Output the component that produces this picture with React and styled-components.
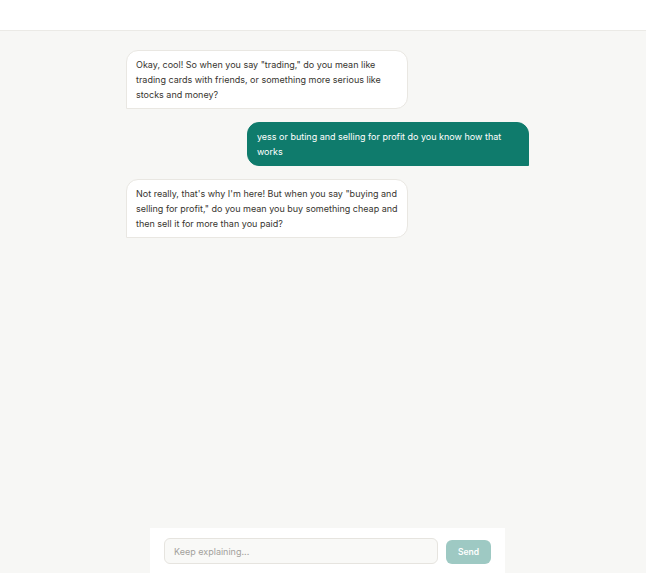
import React from "react";
import styled, { createGlobalStyle } from "styled-components";

const Global = createGlobalStyle`
  html, body { margin: 0; padding: 0; height: 100%; }
  body { font-family: Inter, "Noto Sans", sans-serif; background: #f7f7f5; color: #37352f; }
  #root { height: 100%; }
`;

const Page = styled.div`
  height: 573px;
  display: flex;
  flex-direction: column;
  overflow: hidden;
`;

const Header = styled.header`
  height: 30px;
  flex: none;
  background: #ffffff;
  border-bottom: 1px solid #ebeae6;
`;

const Thread = styled.main`
  flex: 1;
  display: flex;
  flex-direction: column;
  gap: 13px;
  width: 403px;
  margin-left: 126px;
  padding-top: 19px;
  box-sizing: border-box;
`;

const Bubble = styled.div`
  max-width: 70%;
  box-sizing: border-box;
  padding: 6px 9px;
  font-size: 9px;
  line-height: 15px;
  border-radius: ${(p) => (p.$mine ? "12px 12px 0 12px" : "12px 12px 12px 0")};
  align-self: ${(p) => (p.$mine ? "flex-end" : "flex-start")};
  background: ${(p) => (p.$mine ? "#0f7b6c" : "#ffffff")};
  color: ${(p) => (p.$mine ? "#ffffff" : "#37352f")};
  border: 1px solid ${(p) => (p.$mine ? "#0f7b6c" : "#e9e7e2")};
`;

const Composer = styled.footer`
  flex: none;
  width: 355px;
  margin-left: 150px;
  height: 45px;
  box-sizing: border-box;
  background: #ffffff;
  padding: 10px 14px 9px;
  display: flex;
  align-items: center;
  gap: 8px;
`;

const Input = styled.input`
  flex: 1;
  height: 26px;
  box-sizing: border-box;
  border: 1px solid #e6e4df;
  border-radius: 6px;
  background: #f9f9f7;
  padding: 0 9px;
  font-family: Inter, "Noto Sans", sans-serif;
  font-size: 9px;
  color: #37352f;
  outline: none;
  &::placeholder { color: #a3a19c; }
`;

const SendButton = styled.button`
  width: 45px;
  height: 24px;
  margin-top: 2px;
  border: none;
  border-radius: 6px;
  background: #0f7b6c;
  opacity: 0.4;
  color: #ffffff;
  font-family: Inter, "Noto Sans", sans-serif;
  font-size: 8.5px;
  font-weight: 600;
  padding: 0;
`;

const messages = [
  { mine: false, text: 'Okay, cool! So when you say "trading," do you mean like trading cards with friends, or something more serious like stocks and money?' },
  { mine: true, text: "yess or buting and selling for profit do you know how that works" },
  { mine: false, text: 'Not really, that\'s why I\'m here! But when you say "buying and selling for profit," do you mean you buy something cheap and then sell it for more than you paid?' },
];

export default function App() {
  return (
    <>
      <Global />
      <Page>
        <Header />
        <Thread>
          {messages.map((m, i) => (
            <Bubble key={i} $mine={m.mine}>{m.text}</Bubble>
          ))}
        </Thread>
        <Composer>
          <Input placeholder="Keep explaining..." />
          <SendButton disabled>Send</SendButton>
        </Composer>
      </Page>
    </>
  );
}
